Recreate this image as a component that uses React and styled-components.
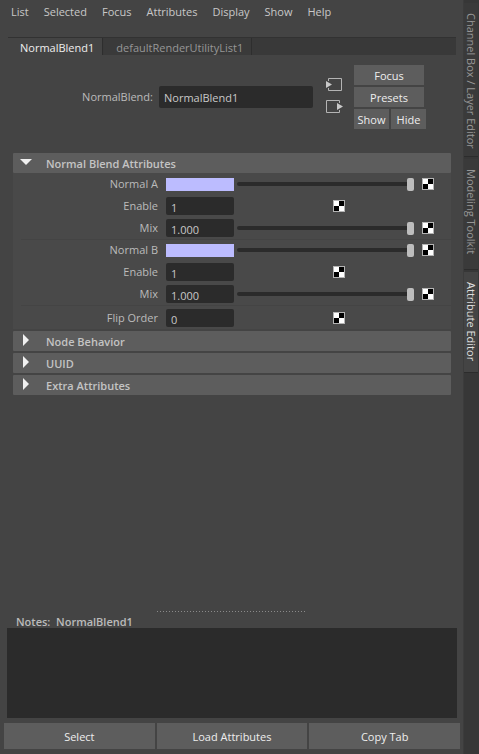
import React, { useState } from "react";
import styled, { createGlobalStyle, css } from "styled-components";

const GlobalStyle = createGlobalStyle`
  *, *::before, *::after { box-sizing: border-box; }
  body { margin: 0; background: #444444; }
  body, button, input, textarea {
    font-family: "Open Sans", "Noto Sans", sans-serif;
    font-size: 11px;
    line-height: 16px;
    color: #bbbbbb;
  }
  button { border: 0; padding: 0; cursor: default; }
`;

const Window = styled.div`
  display: flex;
  min-height: 100vh;
  background: #444444;
`;

const Panel = styled.main`
  flex: 1;
  min-width: 0;
  display: flex;
  flex-direction: column;
`;

const MenuBar = styled.nav`
  display: flex;
  gap: 15px;
  padding: 4px 11px 0;
  height: 37px;
`;

const MenuItem = styled.button`
  height: 16px;
  background: none;
  color: #c8c8c8;
`;

const TabBar = styled.div`
  display: flex;
  gap: 1px;
  height: 18px;
  margin: 0 7px 0 8px;
  background: #393939;
  border-top: 1px solid #323232;
`;

const Tab = styled.button`
  padding: 2px 8px 0 12px;
  border-right: 1px solid #2e2e2e;
  background: ${(p) => (p.$active ? "#444444" : "#3a3a3a")};
  color: ${(p) => (p.$active ? "#eeeeee" : "#969696")};
`;

const NodeHeader = styled.section`
  display: flex;
  align-items: center;
  height: 64px;
  margin: 10px 37px 24px 8px;
`;

const NodeLabel = styled.label`
  flex: 0 0 151px;
  padding-right: 6px;
  text-align: right;
`;

const TextField = styled.input`
  min-width: 0;
  border: 0;
  border-radius: 2px;
  background: #2b2b2b;
  color: #c8c8c8;
  outline: none;
`;

const NodeName = styled(TextField)`
  flex: 1;
  height: 22px;
  padding: 0 5px;
`;

const PortButtons = styled.div`
  display: flex;
  flex-direction: column;
  gap: 6px;
  margin: 0 11px 0 13px;
  padding-bottom: 4px;
`;

const PortButton = styled.button`
  display: block;
  width: 17px;
  height: 16px;
  background: none;
  svg { display: block; }
`;

const Actions = styled.div`
  display: grid;
  grid-template-columns: 35px 35px;
  gap: 2px;
  width: 72px;
`;

const Button = styled.button`
  height: 20px;
  padding-top: 2px;
  background: #5d5d5d;
  color: #eeeeee;
  ${(p) => p.$wide && css`grid-column: 1 / 3; margin-right: 2px;`}
`;

const Sections = styled.div`
  display: flex;
  flex-direction: column;
  gap: 2px;
  margin: 0 12px 0 13px;
`;

const SectionHeader = styled.button`
  display: flex;
  align-items: center;
  width: 100%;
  height: 20px;
  padding-left: 6px;
  border-radius: 1px;
  background: #5d5d5d;
  color: #c4c4c4;
  font-weight: 600;
  svg { display: block; width: 14px; height: 20px; margin-right: 13px; }
  span { padding-top: 2px; }
`;

const SectionBody = styled.div`
  padding-left: 8px;
  background: #494949;
`;

const Group = styled.div`
  box-shadow: 0 1px #444444;
  ${(p) => p.$padded && css`padding-top: 2px;`}
`;

const Row = styled.div`
  display: grid;
  grid-template-columns: 137px 68px minmax(0, 1fr) 12px;
  align-items: center;
  height: 22px;
  padding: 0 17px 0 8px;
`;

const RowLabel = styled.label`
  padding-right: 8px;
  text-align: right;
`;

const NumberField = styled(TextField)`
  width: 68px;
  height: 18px;
  padding: 2px 5px 0;
`;

const Swatch = styled.input`
  width: 68px;
  height: 13px;
  padding: 0;
  border: 0;
  background: none;
  &::-webkit-color-swatch-wrapper { padding: 0; }
  &::-webkit-color-swatch { border: 0; border-radius: 0; }
`;

const Slider = styled.input`
  appearance: none;
  width: calc(100% - 11px);
  height: 14px;
  margin: 0 8px 0 3px;
  background: none;
  &::-webkit-slider-runnable-track {
    height: 4px;
    border-radius: 2px;
    background: #2b2b2b;
  }
  &::-webkit-slider-thumb {
    appearance: none;
    width: 7px;
    height: 13px;
    margin-top: -4px;
    border-radius: 2px;
    background: #bdbdbd;
  }
`;

const MapButton = styled.button`
  display: block;
  width: 12px;
  height: 12px;
  background: none;
  ${(p) => p.$inset && css`margin-left: 99px;`}
  svg { display: block; }
`;

const Splitter = styled.div`
  width: 150px;
  height: 1px;
  margin: auto auto 0;
  background: repeating-linear-gradient(to right, #8a8a8a 0 1px, transparent 1px 3px);
`;

const Notes = styled.section`
  display: flex;
  flex-direction: column;
  margin: 2px 6px 5px 7px;
`;

const NotesLabel = styled.label`
  height: 14px;
  padding-left: 9px;
  font-weight: 600;
  white-space: pre;
`;

const NotesField = styled.textarea`
  display: block;
  height: 90px;
  padding: 4px;
  border: 0;
  background: #2b2b2b;
  color: #c8c8c8;
  resize: none;
  outline: none;
`;

const Footer = styled.footer`
  display: grid;
  grid-template-columns: repeat(3, 1fr);
  gap: 2px;
  padding: 0 3px 5px 4px;
`;

const FooterButton = styled(Button)`
  height: 26px;
`;

const SideBar = styled.aside`
  flex: 0 0 16px;
  display: flex;
  flex-direction: column;
  gap: 2px;
  padding: 3px 1px 0 0;
  border-left: 1px solid #3c3c3c;
  background: #373737;
`;

const SideTab = styled.button`
  display: flex;
  align-items: center;
  width: 14px;
  height: ${(p) => p.$length}px;
  padding-top: 10px;
  border-bottom: 1px solid #2c2c2c;
  writing-mode: vertical-rl;
  white-space: nowrap;
  line-height: 14px;
  background: ${(p) => (p.$active ? "#444444" : "#3a3a3a")};
  color: ${(p) => (p.$active ? "#dddddd" : "#969696")};
`;

function Checker({ label, inset }) {
  return (
    <MapButton $inset={inset} aria-label={`Map ${label}`}>
      <svg width="12" height="12" viewBox="0 0 12 12" shapeRendering="crispEdges">
        <rect width="12" height="12" fill="#b4b4b4" />
        <rect x="1" y="1" width="10" height="10" fill="#fff" />
        <rect x="6" y="1" width="5" height="5" fill="#000" />
        <rect x="1" y="6" width="5" height="5" fill="#000" />
      </svg>
    </MapButton>
  );
}

function ColorRow({ id, label }) {
  return (
    <Row>
      <RowLabel htmlFor={id}>{label}</RowLabel>
      <Swatch id={id} type="color" defaultValue="#bcbcff" />
      <Slider type="range" defaultValue="100" aria-label={`${label} value`} />
      <Checker label={label} />
    </Row>
  );
}

function NumberRow({ id, label, value, slider }) {
  return (
    <Row>
      <RowLabel htmlFor={id}>{label}</RowLabel>
      <NumberField id={id} defaultValue={value} />
      {slider && <Slider type="range" defaultValue="100" aria-label={`${label} amount`} />}
      <Checker label={label} inset={!slider} />
    </Row>
  );
}

function Section({ title, initiallyOpen = false, children }) {
  const [open, setOpen] = useState(initiallyOpen);
  return (
    <div>
      <SectionHeader aria-expanded={open} onClick={() => setOpen(!open)}>
        <svg viewBox="0 0 14 20">
          <path d={open ? "M1 6H13L7 12Z" : "M4 3V15L10 9Z"} fill="#f0f0f0" />
        </svg>
        <span>{title}</span>
      </SectionHeader>
      {open && children && <SectionBody>{children}</SectionBody>}
    </div>
  );
}

const menus = ["List", "Selected", "Focus", "Attributes", "Display", "Show", "Help"];

export default function App() {
  return (
    <>
      <GlobalStyle />
      <Window>
        <Panel>
          <MenuBar>
            {menus.map((name) => <MenuItem key={name}>{name}</MenuItem>)}
          </MenuBar>
          <TabBar role="tablist">
            <Tab role="tab" aria-selected="true" $active>NormalBlend1</Tab>
            <Tab role="tab" aria-selected="false">defaultRenderUtilityList1</Tab>
          </TabBar>
          <NodeHeader>
            <NodeLabel htmlFor="node-name">NormalBlend:</NodeLabel>
            <NodeName id="node-name" defaultValue="NormalBlend1" />
            <PortButtons>
              <PortButton aria-label="Go to input">
                <svg width="17" height="16" viewBox="0 0 17 16">
                  <path d="M2.5 5V2.5H15.5V14.5H2.5V12" fill="none" stroke="#b4b4b4" />
                  <path d="M0 5V12L6 8.5Z" fill="#c8c8c8" />
                </svg>
              </PortButton>
              <PortButton aria-label="Go to output">
                <svg width="17" height="16" viewBox="0 0 17 16">
                  <path d="M13.5 5V2.5H0.5V14.5H13.5V12" fill="none" stroke="#b4b4b4" />
                  <path d="M11 5V12L17 8.5Z" fill="#c8c8c8" />
                </svg>
              </PortButton>
            </PortButtons>
            <Actions>
              <Button $wide>Focus</Button>
              <Button $wide>Presets</Button>
              <Button>Show</Button>
              <Button>Hide</Button>
            </Actions>
          </NodeHeader>
          <Sections>
            <Section title="Normal Blend Attributes" initiallyOpen>
              <Group>
                <ColorRow id="normal-a" label="Normal A" />
                <NumberRow id="enable-a" label="Enable" value="1" />
                <NumberRow id="mix-a" label="Mix" value="1.000" slider />
              </Group>
              <Group>
                <ColorRow id="normal-b" label="Normal B" />
                <NumberRow id="enable-b" label="Enable" value="1" />
                <NumberRow id="mix-b" label="Mix" value="1.000" slider />
              </Group>
              <Group $padded>
                <NumberRow id="flip-order" label="Flip Order" value="0" />
              </Group>
            </Section>
            <Section title="Node Behavior" />
            <Section title="UUID" />
            <Section title="Extra Attributes" />
          </Sections>
          <Splitter />
          <Notes>
            <NotesLabel htmlFor="notes">{"Notes:  NormalBlend1"}</NotesLabel>
            <NotesField id="notes" />
          </Notes>
          <Footer>
            <FooterButton>Select</FooterButton>
            <FooterButton>Load Attributes</FooterButton>
            <FooterButton>Copy Tab</FooterButton>
          </Footer>
        </Panel>
        <SideBar>
          <SideTab $length={154}>Channel Box / Layer Editor</SideTab>
          <SideTab $length={111}>Modeling Toolkit</SideTab>
          <SideTab $length={101} $active>Attribute Editor</SideTab>
        </SideBar>
      </Window>
    </>
  );
}
